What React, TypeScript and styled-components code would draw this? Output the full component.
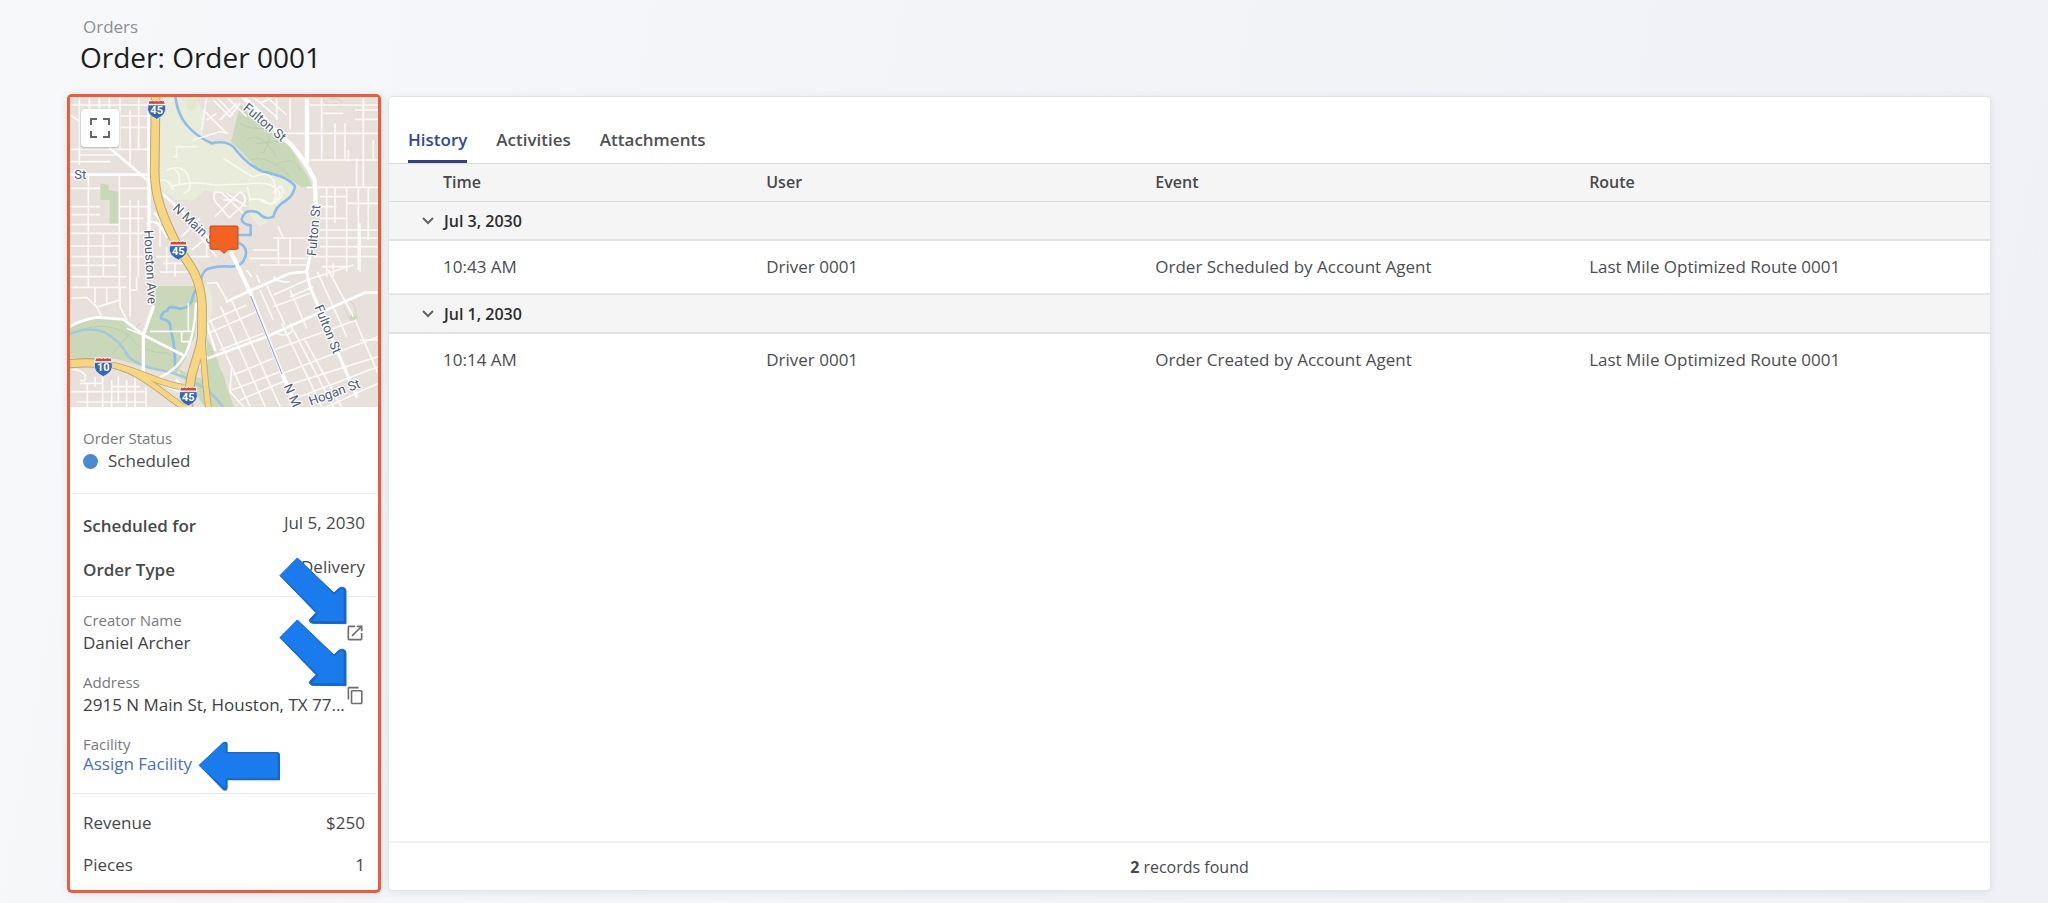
import React, { useState } from 'react';
import styled, { createGlobalStyle } from 'styled-components';

const GlobalStyle = createGlobalStyle`
  *, *::before, *::after { box-sizing: border-box; }
  body {
    margin: 0;
    font-family: 'Open Sans', 'Noto Sans', sans-serif;
    font-size: 17px;
    line-height: 26px;
    color: #48494b;
  }
  button { font: inherit; color: inherit; background: none; border: 0; padding: 0; cursor: pointer; }
`;

const Page = styled.div`
  min-height: 100vh;
  display: flex;
  flex-direction: column;
  padding: 15px 58px 13px 70px;
  background: linear-gradient(100deg, #f6f8fa 0%, #f2f4f8 45%, #eff1f6 100%);
`;

const Header = styled.header`
  padding: 0 0 22px 10px;
`;

const Breadcrumb = styled.a`
  display: block;
  padding-left: 3px;
  line-height: 24px;
  color: #8d8f92;
  text-decoration: none;
`;

const Title = styled.h1`
  margin: 0;
  font-size: 28px;
  line-height: 36px;
  font-weight: 400;
  color: #1c1d1f;
`;

const Content = styled.div`
  flex: 1;
  display: flex;
  gap: 11px;
`;

const Sidebar = styled.aside`
  width: 308px;
  flex: none;
  background: #fff;
  border-radius: 2px;
  box-shadow: 0 0 0 3px #ee5b3c, 0 1px 8px 2px rgba(60, 70, 90, 0.16);
`;

const MapFrame = styled.div`
  position: relative;
  height: 310px;
  overflow: hidden;

  > svg { display: block; width: 100%; height: 100%; }
`;

const FullscreenButton = styled.button`
  position: absolute;
  top: 12px;
  left: 11px;
  width: 38px;
  height: 38px;
  display: grid;
  place-items: center;
  background: #fff;
  border-radius: 4px;
  box-shadow: 0 1px 3px rgba(0, 0, 0, 0.2);
`;

const Section = styled.section<{ $top: number; $bottom: number; $gap?: number }>`
  display: flex;
  flex-direction: column;
  gap: ${(p) => p.$gap ?? 0}px;
  margin: 0 2px;
  padding: ${(p) => p.$top}px 11px ${(p) => p.$bottom}px;

  & + & { border-top: 1px solid #ebebec; }
`;

const Label = styled.div`
  font-size: 15px;
  line-height: 20px;
  color: #77797c;
`;

const Status = styled.div`
  display: flex;
  align-items: center;
  gap: 10px;
`;

const Dot = styled.span`
  width: 15px;
  height: 15px;
  border-radius: 50%;
  background: #488bd0;
`;

const Row = styled.div<{ $strong?: boolean }>`
  display: flex;
  justify-content: space-between;
  align-items: flex-start;
  line-height: ${(p) => (p.$strong ? 24 : 26)}px;
`;

const RowName = styled.span`
  font-weight: 600;
  line-height: 30px;
`;

const Field = styled.div`
  position: relative;
  display: flex;
  justify-content: space-between;
  align-items: flex-start;
`;

const FieldValue = styled.div`
  white-space: nowrap;
  color: #3f4042;
`;

const FieldLink = styled.a`
  display: block;
  line-height: 20px;
  color: #4a6bce;
  text-decoration: none;
`;

const IconButton = styled.button`
  width: 20px;
  height: 20px;
  margin: 13px 0 0 -20px;
  display: grid;
  place-items: center;
  color: #6d6e70;
`;

const DiagonalPointer = styled.svg`
  position: absolute;
  top: -53px;
  right: 18px;
  width: 68px;
  height: 68px;
`;

const LeftPointer = styled.svg`
  position: absolute;
  top: 7px;
  left: 115px;
  width: 82px;
  height: 50px;
`;

const Panel = styled.main`
  flex: 1;
  min-width: 0;
  display: flex;
  flex-direction: column;
  background: #fff;
  border-radius: 4px;
  box-shadow: 0 0 0 1px #e4e6e9, 0 2px 8px 1px rgba(60, 70, 90, 0.09);
`;

const Tabs = styled.div`
  display: flex;
  gap: 29px;
  padding: 31px 19px 0;
  border-bottom: 1px solid #d9dadc;
`;

const Tab = styled.button<{ $active: boolean }>`
  padding-bottom: 8px;
  line-height: 24px;
  font-weight: 600;
  color: ${(p) => (p.$active ? '#33479c' : '#4f5052')};
  border-bottom: 3px solid ${(p) => (p.$active ? '#33437f' : 'transparent')};
`;

const Table = styled.table`
  width: 100%;
  table-layout: fixed;
  border-collapse: separate;
  border-spacing: 0;
  text-align: left;
`;

const HeadCell = styled.th<{ $width: string }>`
  width: ${(p) => p.$width};
  height: 38px;
  padding: 0 0 1px 1px;
  font-size: 16px;
  line-height: 24px;
  font-weight: 600;
  background: #f5f5f6;
  border-bottom: 1px solid #d9dadc;

  &:first-child { padding-left: 54px; }
`;

const GroupCell = styled.th`
  height: 39px;
  padding: 0 0 0 33px;
  background: #f5f5f5;
  border-bottom: 2px solid #e3e3e4;
`;

const GroupToggle = styled.button`
  display: flex;
  align-items: center;
  gap: 10px;
  font-size: 16px;
  line-height: 24px;
  font-weight: 600;
  color: #2c2d2f;
`;

const Chevron = styled.svg<{ $open: boolean }>`
  width: 12px;
  height: 12px;
  transform: rotate(${(p) => (p.$open ? 0 : -90)}deg);
`;

const Cell = styled.td`
  height: 52px;
  padding: 0 0 0 1px;
  color: #4c4d4f;

  &:first-child { padding-left: 54px; }
`;

const Group = styled.tbody`
  &:not(:last-child) tr:last-child td { height: 54px; border-bottom: 2px solid #e8e8e9; }
`;

const Footer = styled.footer`
  margin-top: auto;
  height: 49px;
  display: flex;
  align-items: center;
  justify-content: center;
  gap: 4px;
  font-size: 16px;
  border-top: 2px solid #f2f2f3;

  b { font-weight: 700; }
`;

const MapText = styled.text`
  font-family: Roboto, sans-serif;
  font-size: 39px;
  fill: #4e5a75;
  stroke: #fff;
  stroke-width: 7px;
  stroke-linejoin: round;
  paint-order: stroke;
`;

const ShieldText = styled.text`
  font-family: Roboto, sans-serif;
  font-size: 33px;
  font-weight: 700;
  fill: #fff;
  text-anchor: middle;
`;

const Shield = ({ x, y, n }: { x: number; y: number; n: string }) => (
  <g transform={`translate(${x} ${y})`}>
    <path d="M-23 -27Q-18 -24 -12 -27Q-5 -23 0 -27Q5 -23 12 -27Q18 -24 23 -27L26 -15H-26Z" fill="#d0463f" stroke="#fff" strokeWidth="3" />
    <path d="M-26 -13H26Q30 2 22 14Q14 23 0 30Q-14 23 -22 14Q-30 2 -26 -13Z" fill="#3468b5" stroke="#fff" strokeWidth="2" />
    <ShieldText y={14}>{n}</ShieldText>
  </g>
);

const highways = [
  'M20 822C70 816 120 818 165 827C250 845 300 885 372 892',
  'M165 827C250 850 300 905 385 962',
  'M425 735C432 800 432 870 447 960',
  'M287 10L284 230C280 340 330 420 358 480C395 530 424 570 426 650V730C424 800 384 830 385 960',
];

const AreaMap = () => (
  <svg viewBox="30 21 924 930" preserveAspectRatio="xMidYMid slice" role="img" aria-label="Map of the delivery address">
    <rect x="0" y="0" width="1000" height="1000" fill="#e8e1db" />
    <path d="M300 10H400L436 75L424 150L465 158Q500 150 520 170Q560 225 610 245L700 275Q712 300 680 330Q645 350 640 380L600 412L566 370V310H460L435 300L402 330H345L300 295Z" fill="#e9ecda" />
    <path d="M375 21H410V50Q395 75 378 50Z" fill="#e2e9cf" />
    <path d="M430 580Q460 600 458 650L440 760L425 590Z" fill="#e9ecda" />
    <g fill="#c8d8b8">
      <path d="M540 45L513 155L545 185L592 236L690 268L725 292H757L745 262L690 170L600 105Z" />
      <path d="M121 280L146 285V300L178 306V402H149V330H121Z" />
      <path d="M288 588H402L412 640L405 740L372 798L250 735L268 680Z" />
      <path d="M20 715Q60 690 110 682L190 688L250 735L380 800L350 850Q270 838 215 820Q160 800 100 803H20Z" />
      <path d="M440 745Q470 790 478 830Q495 860 500 890L525 960H440Z" />
      <path d="M350 835L430 870L440 960L400 900Z" />
      <path d="M868 682L880 670L892 682L888 690H872Z" />
    </g>

    <g fill="none" stroke="#bccdb4" strokeWidth="3">
      <path d="M540 100Q570 120 620 115Q640 140 610 190M560 150Q600 120 650 200M590 160L690 150M570 210Q620 190 690 260M640 230Q700 190 720 240" />
      <path d="M60 720Q150 690 210 740Q240 790 330 790M150 800Q200 740 240 700" />
    </g>
    <path d="M790 30Q800 50 830 40Q850 60 845 35Q830 22 810 28M840 640Q870 620 885 650L892 690L870 692L852 650" fill="none" stroke="#d3d3cb" strokeWidth="3" />

    <g fill="none" stroke="#8fbde8" strokeWidth="8" strokeLinejoin="round">
      <path d="M345 10Q350 70 380 105T455 160Q495 150 520 170Q560 225 610 245Q690 262 705 290Q700 315 680 330Q645 350 640 380Q615 392 595 368Q552 352 545 390Q550 403 572 406V435H530" />
      <path d="M535 458Q565 470 556 500Q548 530 515 530Q470 526 440 538Q425 548 422 575Q402 600 395 635Q380 660 355 655Q325 645 322 662Q300 668 304 686Q335 690 332 720Q346 760 345 840" />
      <path d="M20 736Q80 708 130 725Q180 750 205 800Q240 830 300 840T430 892Q470 920 495 960" stroke="#a5c8dc" />
    </g>

    <g fill="none" stroke="#fbfaf8" strokeWidth="5">
      <path d="M58 21V225M88 21V60M118 21V60M148 21V60M180 21V180M236 21V178M210 178V230M210 60V178M30 45H270M180 78H270M180 112H270M30 178H270M30 215H150M60 195H170" />
      <path d="M85 254V590M178 254V570M210 330V590M235 330V560M30 295H120M180 295H268M30 350H120M178 350H268M30 374H120M30 404H178M180 385H250M30 430H250M30 468H180M30 500H180M30 526H170M30 560H200M200 500H250" />
      <path d="M130 430V560M178 570V625M140 590V640M30 625L80 622L110 650L125 680M105 590V640M180 590V650L200 690M30 592H200M115 650L180 630M210 560V680M210 600H230V560" />
      <path d="M300 390V470M330 390V450M290 500H345M310 520H390M300 546H400M320 470V550M345 520V560M365 440L420 385M395 480L470 420M385 500H450M420 440L470 500M440 450V500" />
      <path d="M500 21L560 80M470 21L520 75M430 60L500 130M440 90L470 70M460 30L510 80L540 40M480 90L530 40M580 21L655 85M620 21L680 75M650 21V90M690 21V120M600 40L640 21" />
      <path d="M785 21V210M855 100V210M910 21V290M825 100V210M750 45H954M650 130H954M885 88H954M750 210H954M740 292H954M885 60H954M790 70H850M940 150V210M865 180V215M890 205V290" />
      <path d="M800 292V560M825 292V400M860 292V520M895 292V540M925 292V450M780 320H860M780 350H830M860 340H954M780 385H860M780 420H954M640 444H954M655 410L670 444M655 444V525M690 444V525M780 470H954M570 505H740M600 525H740M580 480H655M760 500H954M860 444V545M900 400V480M785 530H860" />
      <path d="M340 200H350V170M345 170H410M400 150L480 125L505 130M440 21L425 120" stroke="#f8f8f1" />
      <path d="M320 240Q370 220 385 260Q400 300 370 310M345 240Q365 250 355 290M300 270Q330 265 340 300M330 290Q400 270 460 285L560 282Q640 270 660 310Q650 345 625 340Q600 320 570 330L562 290M490 205L580 262Q620 240 640 270Q660 330 630 345M640 310Q670 270 668 310Q650 360 600 330" stroke="#f8f8f1" />
      <path d="M465 305Q455 330 475 345L505 380M465 305L485 308L550 370M540 305L465 380M540 305Q565 320 550 345L505 385M490 330L530 330M500 310L560 350" />
      <path d="M30 75L60 95M200 715L250 736M250 735L375 800M270 724H400M365 724V755H390M385 640V724" />
      <path d="M30 840Q60 835 75 855Q80 880 60 870M82 880V960M128 850V960M155 870V960M200 870V960M225 850V960M30 905H260M60 880H130M50 936H260M155 890H240M105 860V890M175 860V940M258 890V960" />
    </g>

    <g fill="none" stroke="#fbfaf8" strokeWidth="5">
      <path d="M450 690L575 960M482 650L620 960M515 630L665 960M600 600L640 690M665 700L790 960M700 720L825 960M735 750L850 960M690 600L740 715M620 585L675 705M805 540L880 680M885 690L954 850M772 545L860 740M590 555L600 580" />
      <path d="M440 580L470 578L500 630M445 695L560 645M640 615L740 570L880 525M445 730L590 665M640 650L750 610M480 780L610 730M520 855L640 805M515 900L660 845M540 930L680 870M640 780L890 690M670 850L954 740M700 880L954 800M720 920L954 830M780 960L954 880" />
      <path d="M500 800L515 830L510 905L560 960M690 700Q710 730 670 735Q650 735 655 725M820 520V560M900 444V545M900 750H954M640 560Q660 580 690 575M690 620L760 590M560 540L575 560" />
    </g>

    <g fill="none" stroke="#fff" strokeLinecap="round">
      <path d="M150 175L262 270L395 390L440 440" strokeWidth="8" />
      <path d="M30 254H262" strokeWidth="8" />
      <path d="M267 40V440M280 650L250 735V860" strokeWidth="10" />
      <path d="M20 715Q60 690 110 682L190 688L250 735L372 796" strokeWidth="8" />
      <path d="M284 370Q320 410 345 460M262 400Q290 380 320 440M408 640Q405 730 378 790Q350 840 300 862M440 700L465 780M400 860Q430 800 425 760M250 860L360 905M380 900L350 870M420 830L440 800" strokeWidth="7" />
      <path d="M741 10V215M520 -10L600 70Q650 130 690 160Q735 210 764 270L768 345" strokeWidth="13" />
      <path d="M750 500L740 545L750 590L775 650L890 920" strokeWidth="9" />
      <path d="M515 490L572 610M668 855L700 930" strokeWidth="12" />
      <path d="M572 610L668 855" strokeWidth="10" />
      <path d="M500 635L575 600L690 550L740 545M440 806L620 740L730 690L915 608H960" strokeWidth="8" />
    </g>
    <path d="M572 618L666 852" stroke="#8b98bd" strokeWidth="3" />

    {highways.map((d, i) => (
      <path key={`edge${i}`} d={d} fill="none" stroke="#b9a57c" strokeWidth={i === 3 ? 29 : 20} />
    ))}
    {highways.map((d, i) => (
      <path key={`fill${i}`} d={d} fill="none" stroke="#f8d680" strokeWidth={i === 3 ? 23 : 15} />
    ))}
    <path d="M20 822C70 816 110 818 140 822" fill="none" stroke="#b9a57c" strokeWidth="28" />
    <path d="M20 822C70 816 110 818 145 823" fill="none" stroke="#f8d680" strokeWidth="22" />

    <MapText transform="translate(547 58) rotate(40)">Fulton St</MapText>
    <MapText transform="translate(43 267)">St</MapText>
    <MapText transform="translate(336 358) rotate(43)">N Main St</MapText>
    <MapText transform="translate(768 499) rotate(-85)">Fulton St</MapText>
    <MapText transform="translate(252 421) rotate(87)">Houston Ave</MapText>
    <MapText transform="translate(763 651) rotate(68)">Fulton St</MapText>
    <MapText transform="translate(670 889) rotate(66)">N M</MapText>
    <MapText transform="translate(752 947) rotate(-20)">Hogan St</MapText>

    <Shield x={290} y={58} n="45" />
    <Shield x={355} y={480} n="45" />
    <Shield x={130} y={830} n="10" />
    <Shield x={385} y={918} n="45" />

    <path d="M454 408H530Q534 408 534 412V474Q534 478 530 478H505L492 490L479 478H454Q450 478 450 474V412Q450 408 454 408Z" fill="#f26322" stroke="#b74d1d" strokeWidth="3" />
  </svg>
);

const DiagonalArrow = () => (
  <DiagonalPointer viewBox="657 117 204 204" aria-hidden="true">
    <path d="M660 173L712 120L822 225Q838 206 848 208Q858 210 858 218V317L757 316Q744 312 750 303L768 284Z" fill="#1767c9" stroke="#1767c9" strokeWidth="3" strokeLinejoin="round" />
    <path d="M660 171L712 120L822 229L844 212Q850 212 851 219V310L757 309L775 284Z" fill="#1a7cec" />
  </DiagonalPointer>
);

const LeftArrow = () => (
  <LeftPointer viewBox="414 47 246 150" aria-hidden="true">
    <path d="M416 120L489 51Q503 46 503 58V80H650Q660 80 660 90V165H503V188Q502 199 490 195Z" fill="#1767c9" />
    <path d="M416 120L489 54Q497 50 497 60V84H645Q653 84 653 92V159H497V190Z" fill="#1a7cec" />
  </LeftPointer>
);

const tabs = ['History', 'Activities', 'Attachments'];

const columns = [
  { name: 'Time', width: '23.5%' },
  { name: 'User', width: '24.3%' },
  { name: 'Event', width: '27.1%' },
  { name: 'Route', width: '25.1%' },
];

const history = [
  {
    date: 'Jul 3, 2030',
    rows: [['10:43 AM', 'Driver 0001', 'Order Scheduled by Account Agent', 'Last Mile Optimized Route 0001']],
  },
  {
    date: 'Jul 1, 2030',
    rows: [['10:14 AM', 'Driver 0001', 'Order Created by Account Agent', 'Last Mile Optimized Route 0001']],
  },
];

export default function App() {
  const [activeTab, setActiveTab] = useState('History');
  const [closed, setClosed] = useState<string[]>([]);

  const toggle = (date: string) =>
    setClosed((c) => (c.includes(date) ? c.filter((d) => d !== date) : [...c, date]));

  return (
    <Page>
      <GlobalStyle />
      <Header>
        <Breadcrumb href="#orders">Orders</Breadcrumb>
        <Title>Order: Order 0001</Title>
      </Header>
      <Content>
        <Sidebar>
          <MapFrame>
            <AreaMap />
            <FullscreenButton aria-label="Full screen">
              <svg width="20" height="20" viewBox="0 0 20 20" fill="none" stroke="#666" strokeWidth="2">
                <path d="M1 7V1H7M13 1H19V7M19 13V19H13M7 19H1V13" />
              </svg>
            </FullscreenButton>
          </MapFrame>
          <Section $top={21} $bottom={19}>
            <Label>Order Status</Label>
            <Status>
              <Dot />
              Scheduled
            </Status>
          </Section>
          <Section $top={17} $bottom={11} $gap={14}>
            <Row $strong>
              <RowName>Scheduled for</RowName>
              <span>Jul 5, 2030</span>
            </Row>
            <Row $strong>
              <RowName>Order Type</RowName>
              <span>Delivery</span>
            </Row>
          </Section>
          <Section $top={13} $bottom={19} $gap={16}>
            <Field>
              <div>
                <Label>Creator Name</Label>
                <FieldValue>Daniel Archer</FieldValue>
              </div>
              <IconButton aria-label="Open creator">
                <svg width="20" height="20" viewBox="0 0 24 24" fill="currentColor">
                  <path d="M19 19H5V5h7V3H5a2 2 0 0 0-2 2v14a2 2 0 0 0 2 2h14c1.100 0 2-.9 2-2v-7h-2v7zM14 3v2h3.590l-9.830 9.830 1.410 1.410L19 6.410V10h2V3h-7z" />
                </svg>
              </IconButton>
              <DiagonalArrow />
            </Field>
            <Field>
              <div>
                <Label>Address</Label>
                <FieldValue>2915 N Main St, Houston, TX 77...</FieldValue>
              </div>
              <IconButton aria-label="Copy address">
                <svg width="19" height="19" viewBox="0 0 24 24" fill="currentColor">
                  <path d="M16 1H4c-1.100 0-2 .9-2 2v14h2V3h12V1zm3 4H8c-1.100 0-2 .9-2 2v14c0 1.100.9 2 2 2h11c1.100 0 2-.9 2-2V7c0-1.100-.9-2-2-2zm0 16H8V7h11v14z" />
                </svg>
              </IconButton>
              <DiagonalArrow />
            </Field>
            <Field>
              <div>
                <Label>Facility</Label>
                <FieldLink href="#assign-facility">Assign Facility</FieldLink>
              </div>
              <LeftArrow />
            </Field>
          </Section>
          <Section $top={16} $bottom={12} $gap={16}>
            <Row>
              <span>Revenue</span>
              <span>$250</span>
            </Row>
            <Row>
              <span>Pieces</span>
              <span>1</span>
            </Row>
          </Section>
        </Sidebar>
        <Panel>
          <Tabs role="tablist">
            {tabs.map((t) => (
              <Tab key={t} role="tab" aria-selected={t === activeTab} $active={t === activeTab} onClick={() => setActiveTab(t)}>
                {t}
              </Tab>
            ))}
          </Tabs>
          <Table>
            <thead>
              <tr>
                {columns.map((c) => (
                  <HeadCell key={c.name} $width={c.width} scope="col">
                    {c.name}
                  </HeadCell>
                ))}
              </tr>
            </thead>
            {history.map((g) => (
              <Group key={g.date}>
                <tr>
                  <GroupCell colSpan={4} scope="rowgroup">
                    <GroupToggle aria-expanded={!closed.includes(g.date)} onClick={() => toggle(g.date)}>
                      <Chevron $open={!closed.includes(g.date)} viewBox="0 0 12 12" fill="none" stroke="#626365" strokeWidth="2">
                        <path d="M1 3L6 8L11 3" />
                      </Chevron>
                      {g.date}
                    </GroupToggle>
                  </GroupCell>
                </tr>
                {!closed.includes(g.date) &&
                  g.rows.map((r) => (
                    <tr key={r[0]}>
                      {r.map((v) => (
                        <Cell key={v}>{v}</Cell>
                      ))}
                    </tr>
                  ))}
              </Group>
            ))}
          </Table>
          <Footer>
            <b>2</b> records found
          </Footer>
        </Panel>
      </Content>
    </Page>
  );
}
